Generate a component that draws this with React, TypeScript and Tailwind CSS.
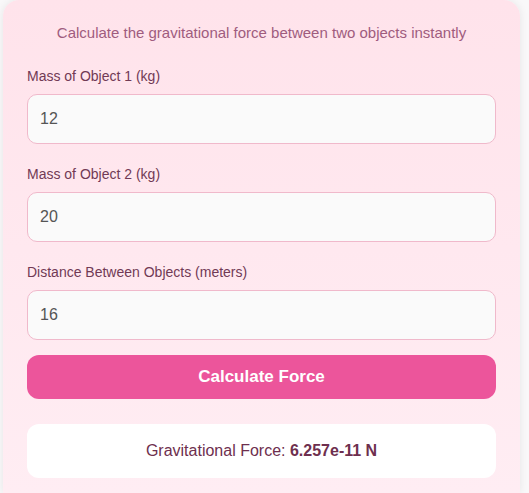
import { useState } from "react"

function Field({ label, value, onChange }: { label: string; value: string; onChange: (v: string) => void }) {
  return (
    <div className="mb-5">
      <label className="block mb-2 text-[14px] leading-5 text-[#713a55]">{label}</label>
      <input
        type="number"
        value={value}
        onChange={(e) => onChange(e.target.value)}
        className="block w-full h-[50px] px-3 rounded-[10px] border border-[#f0b9cb] bg-[#fafafa]
                   text-[16px] text-[#555] outline-none"
      />
    </div>
  )
}

export default function App() {
  const [m1, setM1] = useState("12")
  const [m2, setM2] = useState("20")
  const [d, setD] = useState("16")
  const [force, setForce] = useState("6.257e-11")

  const calc = () => {
    const G = 6.674e-11
    const r = parseFloat(d)
    const f = (G * parseFloat(m1) * parseFloat(m2)) / (r * r)
    setForce(f.toExponential(3))
  }

  return (
    <div className="h-screen overflow-hidden bg-[#f9f8f9] px-[3px] font-['Liberation_Sans',Arial,sans-serif]">
      <div className="w-[517px] h-full rounded-t-2xl bg-gradient-to-b from-[#ffe3eb] to-[#ffedf3] px-6 pt-[21px] shadow-[0_0_8px_rgba(0,0,0,0.08)]">
        <p className="mb-[21px] text-center text-[15px] leading-6 text-[#a05c7e]">
          Calculate the gravitational force between two objects instantly
        </p>

        <Field label="Mass of Object 1 (kg)" value={m1} onChange={setM1} />
        <Field label="Mass of Object 2 (kg)" value={m2} onChange={setM2} />
        <div className="mb-[15px]">
          <label className="block mb-2 text-[14px] leading-5 text-[#713a55]">Distance Between Objects (meters)</label>
          <input
            type="number"
            value={d}
            onChange={(e) => setD(e.target.value)}
            className="block w-full h-[50px] px-3 rounded-[10px] border border-[#f0b9cb] bg-[#fafafa]
                       text-[16px] text-[#555] outline-none"
          />
        </div>

        <button
          onClick={calc}
          className="block w-full h-[44px] rounded-xl bg-[#ec559b] text-white text-[17px] font-bold"
        >
          Calculate Force
        </button>

        <div className="mt-[25px] h-[54px] rounded-xl bg-white flex items-center justify-center text-[16px] text-[#6e2f4e]">
          Gravitational Force:&nbsp;<span className="font-bold">{force} N</span>
        </div>
      </div>
    </div>
  )
}
